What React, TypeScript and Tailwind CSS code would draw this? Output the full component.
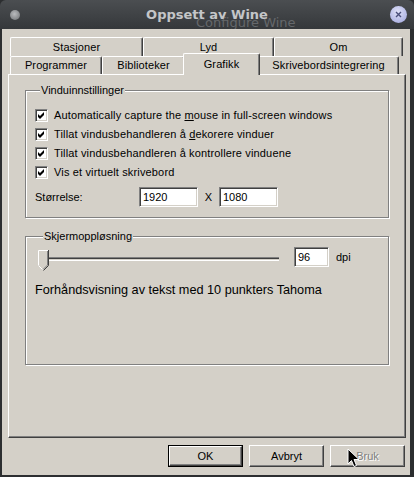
import React from "react";

const ui = "font-['Liberation_Sans',Arial,sans-serif]";

// classic raised / sunken bevels
const raised =
  "border border-t-white border-l-white border-r-[#404040] border-b-[#404040] shadow-[inset_-1px_-1px_0_#808080]";
const sunken =
  "border border-t-[#808080] border-l-[#808080] border-r-white border-b-white shadow-[inset_1px_1px_0_#404040,inset_-1px_-1px_0_#d4d0c8]";
const etched =
  "border border-[#808080] shadow-[inset_1px_1px_0_#fff,1px_1px_0_#fff]";

const Tab = ({
  label,
  width,
  selected = false,
  tall = false,
}: {
  label: string;
  width: string;
  selected?: boolean;
  tall?: boolean;
}) => (
  <div
    className={`${width} ${
      selected ? "h-[22px] relative z-10 -mb-[1px] mx-[-2px] px-[2px]" : tall ? "h-[19px]" : "h-[18px]"
    } flex items-center justify-center bg-[#d4d0c8] rounded-t-[2px] border-t border-l border-t-white border-l-white border-r border-r-[#404040] shadow-[inset_-1px_0_0_#808080] text-[11px] tracking-[0.1px] text-black`}
  >
    {label}
  </div>
);

const CheckRow = ({ label, mnemonic }: { label: string; mnemonic?: [string, string, string] }) => (
  <div className="h-[19px] flex items-center">
    <div className={`w-[13px] h-[13px] bg-white ${sunken} flex items-center justify-center`}>
      <svg width="7" height="7" viewBox="0 0 7 7">
        <path d="M0 2 L2 4 L6 0 L6 3 L2 7 L0 5 Z" fill="#000" />
      </svg>
    </div>
    <span className="ml-[6px] text-[11px] tracking-[0.15px] text-black whitespace-nowrap">
      {mnemonic ? (
        <>
          {mnemonic[0]}
          <span className="underline">{mnemonic[1]}</span>
          {mnemonic[2]}
        </>
      ) : (
        label
      )}
    </span>
  </div>
);

const Field = ({ value, width }: { value: string; width: string }) => (
  <div className={`${width} h-[20px] bg-white ${sunken} flex items-center pl-[3px] text-[11px] text-black`}>
    {value}
  </div>
);

const Button = ({
  label,
  def = false,
  disabled = false,
}: {
  label: string;
  def?: boolean;
  disabled?: boolean;
}) => (
  <div
    className={`w-[75px] h-[22px] ${def ? "outline outline-1 outline-black -outline-offset-1" : ""} flex`}
  >
    <div
      className={`flex-1 ${def ? "m-[1px]" : ""} ${raised} flex items-center justify-center text-[11px] ${
        disabled ? "text-[#808080] [text-shadow:1px_1px_0_#fff]" : "text-black"
      }`}
    >
      {label}
    </div>
  </div>
);

export default function App() {
  return (
    <div className={`${ui} w-[414px] h-[477px] bg-[#2c2e30] flex flex-col overflow-hidden relative`}>
      {/* Title bar */}
      <div className="h-[29px] bg-gradient-to-b from-[#4b4e51] to-[#35383b] relative flex items-center justify-center overflow-hidden rounded-t-[6px]">
        <span className="absolute left-[196px] top-[15px] text-[13px] leading-[16px] text-[#65686b] font-['DejaVu_Sans',sans-serif] whitespace-nowrap">
          Configure Wine
        </span>
        <span className="relative text-[13px] font-bold text-[#c4c6c8] font-['DejaVu_Sans',sans-serif] mt-[1px]">
          Oppsett av Wine
        </span>
        <div className="absolute left-[10px] top-[10px] w-[10px] h-[10px] rounded-full bg-[radial-gradient(circle_at_45%_40%,#b9bbbe,#6b6e71)]" />
        <div className="absolute left-[390px] top-[6px] w-[17px] h-[17px] rounded-full bg-[radial-gradient(circle_at_45%_35%,#dfe1f7,#9ea4dc)] flex items-center justify-center">
          <svg width="7" height="7" viewBox="0 0 7 7">
            <path d="M1 1 L6 6 M6 1 L1 6" stroke="#4a4f7a" strokeWidth="1.4" />
          </svg>
        </div>
      </div>

      {/* Window body */}
      <div className="flex-1 ml-[2px] mr-[4px] mb-[2px] bg-[#d4d0c8] flex flex-col pt-[8px] pl-[6px] pr-[4px]">
        {/* Tabs */}
        <div className="pl-[2px] pr-[3px] flex flex-col">
          <div className="flex">
            <Tab label="Stasjoner" width="w-[133px]" tall />
            <Tab label="Lyd" width="w-[131px]" tall />
            <Tab label="Om" width="w-[129px]" tall />
          </div>
          <div className="flex items-end h-[18px]">
            <Tab label="Programmer" width="w-[92px]" />
            <Tab label="Biblioteker" width="w-[83px]" />
            <Tab label="Grafikk" width="w-[77px]" selected />
            <Tab label="Skrivebordsintegrering" width="w-[141px]" />
          </div>
        </div>

        {/* Tab panel */}
        <div className={`h-[364px] ${raised} pt-[9px] px-[16px] flex flex-col`}>
          <fieldset className={`${etched} pb-[10px] pl-[9px]`}>
            <legend className="ml-[5px] px-[1px] text-[11px] leading-[13px] text-black bg-[#d4d0c8]">
              Vinduinnstillinger
            </legend>
            <div className="pt-[9px] flex flex-col">
              <CheckRow
                label=""
                mnemonic={["Automatically capture the ", "m", "ouse in full-screen windows"]}
              />
              <CheckRow label="" mnemonic={["Tillat vindusbehandleren å ", "d", "ekorere vinduer"]} />
              <CheckRow label="Tillat vindusbehandleren å kontrollere vinduene" />
              <CheckRow label="Vis et virtuelt skrivebord" />
              <div className="mt-[5px] flex items-center text-[11px] text-black">
                <span className="w-[104px]">Størrelse:</span>
                <Field value="1920" width="w-[59px]" />
                <span className="w-[21px] text-center">X</span>
                <Field value="1080" width="w-[59px]" />
              </div>
            </div>
          </fieldset>

          <fieldset className={`${etched} mt-[12px] h-[135px] pl-[12px]`}>
            <legend className="ml-[5px] px-[1px] text-[11px] leading-[13px] text-black bg-[#d4d0c8]">
              Skjermoppløsning
            </legend>
            <div className="pt-[4px] flex items-start">
              <div className="relative w-[241px] h-[21px] mt-[3px] flex items-start">
                <div className="mt-[7px] w-full h-[4px] border-t border-t-[#808080] border-b border-b-white bg-[#404040] shadow-[inset_0_-1px_0_#d4d0c8]" />
                <svg className="absolute left-0 top-0" width="11" height="21" viewBox="0 0 11 21">
                  <path d="M0 0 H10 V15 L5 20 L0 15 Z" fill="#d4d0c8" />
                  <path d="M0.5 15 V0.5 H10" stroke="#fff" fill="none" />
                  <path d="M0.5 15.5 L5 20" stroke="#fff" fill="none" />
                  <path d="M10.5 0 V15.5 L5.5 20.5" stroke="#404040" fill="none" />
                  <path d="M9.5 1 V15 L5 19.5" stroke="#808080" fill="none" />
                </svg>
              </div>
              <div className="ml-[15px] flex items-center">
                <Field value="96" width="w-[35px]" />
                <span className="ml-[7px] text-[11px] text-black">dpi</span>
              </div>
            </div>
            <div className="mt-[10px] -ml-[3px] text-[12.7px] text-black whitespace-nowrap">
              Forhåndsvisning av tekst med 10 punkters Tahoma
            </div>
          </fieldset>
        </div>

        {/* Buttons */}
        <div className="mt-[7px] flex justify-end gap-[6px] pr-[1px]">
          <Button label="OK" def />
          <Button label="Avbryt" />
          <Button label="Bruk" disabled />
        </div>
      </div>

      {/* Mouse pointer */}
      <svg className="absolute left-[347px] top-[448px]" width="13" height="20" viewBox="0 0 13 20">
        <path d="M1 1 V16 L4.5 12.5 L7 18.5 L9.5 17.5 L7 11.5 H12 Z" fill="#000" stroke="#fff" strokeWidth="1" />
      </svg>
    </div>
  );
}
